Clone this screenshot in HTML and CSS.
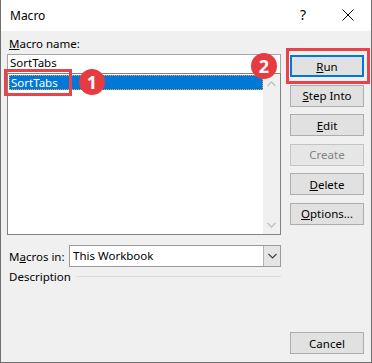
FILE: index.html
```html
<!DOCTYPE html>
<html lang="en">
<head>
    <meta charset="UTF-8">
    <title>Macro</title>
    <link rel="stylesheet" href="styles.css">
</head>
<body>
    <div class="dialog">
        <div class="titlebar">
            <span class="title">Macro</span>
            <span class="help">?</span>
            <svg class="close" width="12" height="12" viewBox="0 0 12 12">
                <path d="M0.5 0.5 L11.5 11.5 M11.5 0.5 L0.5 11.5" stroke="#000" stroke-width="1" fill="none"/>
            </svg>
        </div>

        <div class="content">
            <div class="main">
                <div class="label"><u>M</u>acro name:</div>
                <div class="name-box">SortTabs</div>
                <div class="list">
                    <div class="list-items">
                        <div class="item selected">SortTabs</div>
                    </div>
                    <div class="scrollbar">
                        <svg width="9" height="6" viewBox="0 0 9 6"><path d="M0.5 5 L4.5 1 L8.5 5" stroke="#c2c2c2" stroke-width="1.3" fill="none"/></svg>
                        <svg width="9" height="6" viewBox="0 0 9 6"><path d="M0.5 1 L4.5 5 L8.5 1" stroke="#c2c2c2" stroke-width="1.3" fill="none"/></svg>
                    </div>
                </div>

                <div class="macros-in">
                    <span class="macros-label">M<u>a</u>cros in:</span>
                    <div class="combo">
                        <span class="combo-value">This Workbook</span>
                        <span class="combo-drop">
                            <svg width="9" height="6" viewBox="0 0 9 6"><path d="M0.5 1 L4.5 5 L8.5 1" stroke="#404040" stroke-width="1.1" fill="none"/></svg>
                        </span>
                    </div>
                </div>

                <div class="desc">
                    <span>Description</span>
                    <span class="rule"></span>
                </div>
            </div>

            <div class="buttons">
                <button class="btn default"><u>R</u>un</button>
                <button class="btn"><u>S</u>tep Into</button>
                <button class="btn"><u>E</u>dit</button>
                <button class="btn" disabled>Create</button>
                <button class="btn"><u>D</u>elete</button>
                <button class="btn"><u>O</u>ptions...</button>
                <div class="spacer"></div>
                <button class="btn">Cancel</button>
            </div>
        </div>

        <!-- annotations -->
        <div class="mark mark-item"></div>
        <div class="mark mark-run"></div>
        <div class="badge badge-1">1</div>
        <div class="badge badge-2">2</div>
    </div>
</body>
</html>
```

FILE: styles.css
```css
* {
    margin: 0;
    padding: 0;
    box-sizing: border-box;
}

body {
    background: #ffffff;
    font-family: "Segoe UI", "Noto Sans", sans-serif;
    font-size: 11.5px;
    color: #000;
}

.dialog {
    position: relative;
    width: 372px;
    height: 363px;
    display: flex;
    flex-direction: column;
    border: 1px solid #6f6f6f;
    border-top: none;
    background: #f0f0f0;
}

.titlebar {
    height: 31px;
    flex: none;
    display: flex;
    align-items: center;
    background: #fff;
    padding-left: 9px;
}

.title {
    font-size: 12px;
    flex: 1;
}

.help {
    font-size: 14px;
    margin-right: 36px;
    margin-top: -2px;
}

.close {
    margin-right: 17px;
    margin-top: -1px;
}

.content {
    flex: 1;
    display: flex;
    padding: 0 6px 8px 6px;
}

.main {
    width: 274px;
    display: flex;
    flex-direction: column;
    padding-top: 5px;
}

.label {
    height: 16px;
    line-height: 16px;
    padding-left: 2px;
    margin-bottom: 2px;
}

.name-box {
    height: 19px;
    line-height: 16px;
    padding-left: 2px;
    background: #fff;
    border: 1px solid #a5a5a5;
    border-bottom: none;
}

.list {
    height: 162px;
    display: flex;
    background: #fff;
    border: 1px solid #828282;
}

.list-items {
    flex: 1;
    padding: 1px 0 0 1px;
}

.item {
    height: 15px;
    line-height: 13px;
    padding-left: 1px;
}

.item.selected {
    background: #0078d7;
    color: #fff;
    border: 1px dotted #f0a040;
}

.scrollbar {
    width: 17px;
    background: #f0f0f0;
    display: flex;
    flex-direction: column;
    justify-content: space-between;
    align-items: center;
    padding: 7px 0 6px;
}

.macros-in {
    display: flex;
    align-items: center;
    margin-top: 10px;
    height: 22px;
}

.macros-label {
    width: 62px;
    padding-left: 2px;
}

.combo {
    flex: 1;
    height: 22px;
    display: flex;
    background: #fff;
    border: 1px solid #9a9a9a;
}

.combo-value {
    flex: 1;
    line-height: 20px;
    padding-left: 3px;
}

.combo-drop {
    width: 17px;
    display: flex;
    align-items: center;
    justify-content: center;
    background: #e5e5e5;
    border-left: 1px solid #b4b4b4;
}

.desc {
    display: flex;
    align-items: center;
    margin-top: 1px;
    height: 16px;
    padding-left: 2px;
}

.rule {
    flex: 1;
    height: 1px;
    margin-left: 5px;
    background: #dcdcdc;
}

.buttons {
    margin-left: 9px;
    width: 74px;
    display: flex;
    flex-direction: column;
    gap: 7.6px;
    padding-top: 24px;
}

.spacer {
    flex: 1;
}

.btn {
    height: 22px;
    flex: none;
    font-family: inherit;
    font-size: 11.5px;
    color: #000;
    background: #e1e1e1;
    border: 1px solid #adadad;
}

.btn.default {
    border: 2px solid #0078d7;
}

.btn:disabled {
    color: #838383;
    background: #e6e6e6;
    border-color: #c4c4c4;
}

.mark {
    position: absolute;
    border: 3px solid #e8424b;
}

.mark-item {
    left: 3px;
    top: 69px;
    width: 68px;
    height: 27px;
}

.mark-run {
    left: 285px;
    top: 48px;
    width: 84px;
    height: 36px;
}

.badge {
    position: absolute;
    width: 26px;
    height: 26px;
    border-radius: 50%;
    background: #e63b40;
    color: #fff;
    font-family: "Noto Sans", sans-serif;
    font-weight: bold;
    font-size: 18px;
    line-height: 26px;
    text-align: center;
}

.badge-1 {
    left: 78px;
    top: 69px;
}

.badge-2 {
    left: 250px;
    top: 53px;
}
```
